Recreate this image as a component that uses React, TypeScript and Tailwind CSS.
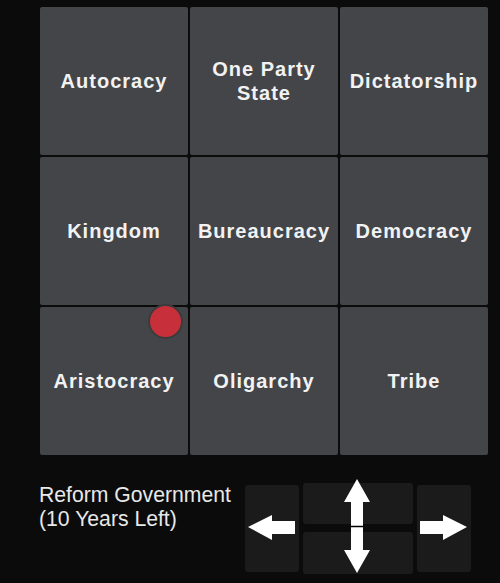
const cells = [
  "Autocracy",
  "One Party\nState",
  "Dictatorship",
  "Kingdom",
  "Bureaucracy",
  "Democracy",
  "Aristocracy",
  "Oligarchy",
  "Tribe",
];

export default function App() {
  return (
    <div className="w-[500px] h-[583px] bg-[#0b0b0b] overflow-hidden font-['Liberation_Sans',Arial,sans-serif]">
      <div className="ml-[40px] pt-[7px] grid grid-cols-3 gap-[2px] w-[448px]">
        {cells.map((name, i) => (
          <div
            key={name}
            className="relative h-[148px] rounded-[2px] bg-[#434548] flex items-center justify-center"
          >
            <span className="whitespace-pre-line text-center text-[20px] leading-[24px] font-bold tracking-[1px] text-[#f2f2f2]">
              {name}
            </span>
            {i === 6 && (
              <span className="absolute left-[108px] top-[-3px] w-[35px] h-[35px] rounded-full bg-[#c7303a] border-2 border-[#3b3b3d]" />
            )}
          </div>
        ))}
      </div>

      <div className="mt-[27px] flex">
        <div className="ml-[39px] w-[206px] pt-[1px] text-[21.2px] leading-[24px] text-[#e8e8e8]">
          Reform Government
          <br />
          (10 Years Left)
        </div>
        <Pad />
      </div>
    </div>
  );
}

function Pad() {
  return (
    <div className="relative flex items-center gap-[4px] h-[91px] mt-[1px]">
      <div className="w-[54px] h-[87px] rounded-[3px] bg-[#1b1b1b]" />
      <div className="flex flex-col gap-[8px]">
        <div className="w-[110px] h-[41px] rounded-[3px] bg-[#1b1b1b]" />
        <div className="w-[110px] h-[42px] rounded-[3px] bg-[#1b1b1b]" />
      </div>
      <div className="w-[54px] h-[87px] rounded-[3px] bg-[#1b1b1b]" />

      {/* arrows drawn over the buttons */}
      <svg
        className="absolute left-0 top-[-4px] pointer-events-none"
        width="230"
        height="96"
        viewBox="0 0 230 96"
      >
        {/* left */}
        <polygon points="3,48 27,36 27,42 50,42 50,55 27,55 27,61" fill="#fff" />
        {/* right */}
        <polygon points="222,48 198,36 198,42 175,42 175,55 198,55 198,61" fill="#fff" />
        {/* up/down */}
        <polygon points="112,0 125,23 118,23 118,71 125,71 112,94 99,71 106,71 106,23 99,23" fill="#fff" />
        <line x1="106" y1="47.5" x2="118" y2="47.5" stroke="#000" strokeWidth="1.5" />
      </svg>
    </div>
  );
}
